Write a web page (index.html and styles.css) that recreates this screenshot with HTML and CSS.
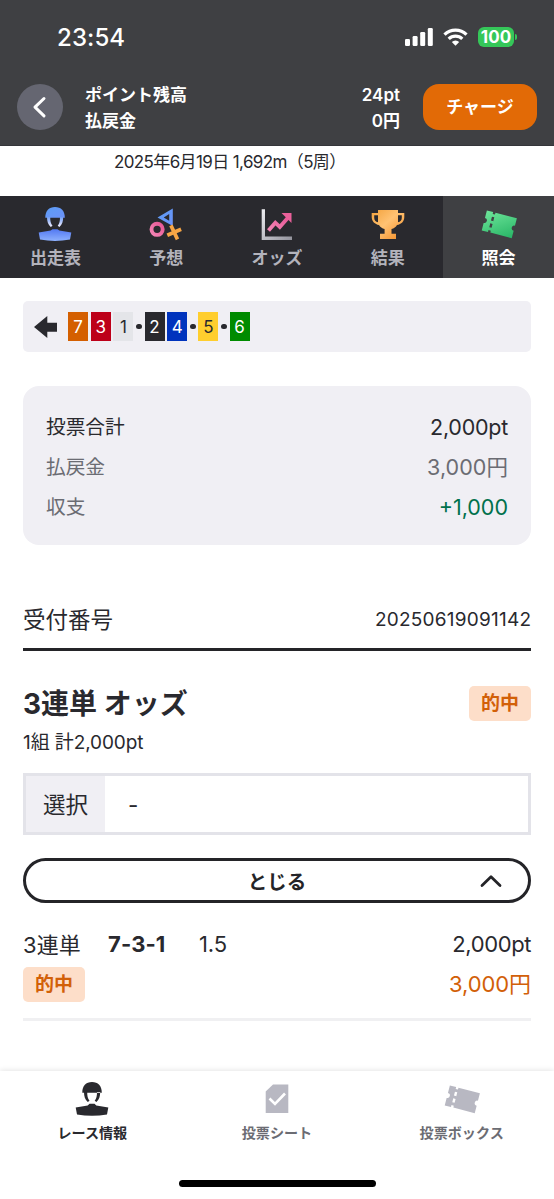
FILE: index.html
```html
<!DOCTYPE html>
<html lang="ja">
<head>
<meta charset="utf-8">
<title>照会</title>
<link rel="stylesheet" href="styles.css">
</head>
<body>
<svg class="defs" width="0" height="0" aria-hidden="true">
  <defs>
    <linearGradient id="blue" x1="0" y1="0" x2="1" y2="1"><stop offset="0" stop-color="#5c9df5"/><stop offset="1" stop-color="#6c91f8"/></linearGradient>
    <linearGradient id="face" x1="0" y1="0" x2="0" y2="1"><stop offset="0" stop-color="#6f9df5"/><stop offset="1" stop-color="#f4f0ff"/></linearGradient>
    <linearGradient id="body" x1="0" y1="0" x2="0" y2="1"><stop offset="0" stop-color="#5379f2"/><stop offset="1" stop-color="#8db0fd"/></linearGradient>
    <linearGradient id="pink" x1="0" y1="1" x2="1" y2="0"><stop offset="0" stop-color="#f486b5"/><stop offset="1" stop-color="#e65594"/></linearGradient>
    <linearGradient id="gold" x1="0" y1="0" x2="1" y2="1"><stop offset="0" stop-color="#f3a13b"/><stop offset=".45" stop-color="#ffc273"/><stop offset="1" stop-color="#f28b24"/></linearGradient>
    <linearGradient id="grey" x1="0" y1="0" x2="1" y2="1"><stop offset="0" stop-color="#eeeef2"/><stop offset="1" stop-color="#92929b"/></linearGradient>
    <linearGradient id="green" x1="0" y1="0" x2="1" y2="1"><stop offset="0" stop-color="#6ee59a"/><stop offset="1" stop-color="#28b566"/></linearGradient>
    <symbol id="ticket" viewBox="0 0 36 36">
      <g transform="translate(18.3 18.3) rotate(14.5)">
        <path d="M-15.500-10.300h6.500v2h2.400v-2H15.500v7.700a2.600 2.600 0 0 0 0 5.200v7.700H-6.600v-2h-2.400v2h-6.500v-7.700a2.600 2.600 0 0 0 0-5.200zM-9-5.500v4h2.400v-4zM-9 1.300v4h2.400v-4z" fill-rule="evenodd"/>
      </g>
    </symbol>
  </defs>
</svg>
<header class="top">
  <div class="status">
    <span class="time">23:54</span>
    <div class="indicators">
      <svg width="28" height="18" viewBox="0 0 28 18" fill="#fff"><rect y="11" width="5" height="7" rx="1.3"/><rect x="7.600" y="8" width="5" height="10" rx="1.300"/><rect x="15.200" y="4" width="5" height="14" rx="1.300"/><rect x="22.800" width="5" height="18" rx="1.300"/></svg>
      <svg class="wifi" width="25" height="18" viewBox="0 0 25 18"><g fill="none" stroke="#fff" stroke-width="3.200"><path d="M1.500 6.700a15.600 15.600 0 0 1 22 0"/><path d="M5.700 10.900a9.700 9.700 0 0 1 13.600 0"/></g><path d="M12.500 17.800l-3.700-3.700a5.300 5.300 0 0 1 7.400 0z" fill="#fff"/></svg>
      <span class="battery">100</span><i class="cap"></i>
    </div>
  </div>
  <div class="account">
    <button class="back" aria-label="戻る"><svg width="46" height="46" viewBox="0 0 46 46" fill="none" stroke="#fff" stroke-width="3" stroke-linecap="round" stroke-linejoin="round"><path d="M27 14.500l-9 8.700 9 8.700"/></svg></button>
    <div class="labels"><span>ポイント残高</span><span>払戻金</span></div>
    <div class="balance"><span>24pt</span><span>0円</span></div>
    <button class="charge">チャージ</button>
  </div>
</header>
<div class="date">2025年6月19日 1,692m（5周）</div>
<nav class="tabs">
  <a><svg width="36" height="36" viewBox="0 0 36 36"><path d="M8.300 11.700C8.200 5 12 1 18 1s9.900 4 9.800 10.700z" fill="url(#blue)"/><path d="M10 11h3.200c0 4 .5 6.500 2.300 8.800l-1.700 1.200C11 18.500 10 15.500 10 11zM26.200 11H23c0 4-.5 6.500-2.300 8.800l1.700 1.200c2.800-2.500 3.800-5.500 3.800-10z" fill="url(#face)"/><path d="M15.500 23.300h5l1.800 1.200 12 2L33 33.500Q18 36.300 3 33.500l-1.300-7 12-2z" fill="url(#body)"/></svg><span>出走表</span></a>
  <a><svg width="36" height="36" viewBox="0 0 36 36" fill="none"><path d="M24.800 2.400V20L9.500 11.500zM21.200 8l-5.500 3.500 5.500 3.200z" fill="url(#blue)" fill-rule="evenodd"/><circle cx="9.100" cy="23.300" r="5.600" stroke="url(#pink)" stroke-width="3.900"/><path d="M19.300 29.300l13.800-6M22.900 19.400l6.600 14" stroke="#f7a545" stroke-width="3.700"/></svg><span>予想</span></a>
  <a><svg width="36" height="36" viewBox="0 0 36 36" fill="none"><path d="M2.700 3.300h3.300v27.200H33V34H2.700z" fill="url(#grey)"/><path d="M9.500 24.500l6.800-7.800 4.500 4.300L30 10.500" stroke="url(#pink)" stroke-width="3.900"/><path d="M22.500 7h10v10z" fill="#e9609a"/></svg><span>オッズ</span></a>
  <a><svg width="36" height="36" viewBox="0 0 36 36"><path d="M8 4h20v3h6.300v4c0 4.500-3 7.300-7.300 8-1.200 2-3 3.500-5.500 4v4.800H26V33H10v-5.200h4.600V23c-2.500-.5-4.400-2-5.600-4-4-.7-7.300-3.500-7.300-8V7H8zM4.200 9.300v2.400c0 2.600 1.400 4 3.800 4.600v-7zm23.800 0v7c2.500-.6 3.800-2 3.800-4.600V9.300z" fill="url(#gold)" fill-rule="evenodd"/></svg><span>結果</span></a>
  <a class="current"><svg width="36" height="36" fill="url(#green)"><use href="#ticket"/></svg><span>照会</span></a>
</nav>
<main>
  <div class="order">
    <svg width="23" height="22" viewBox="0 0 23 22" fill="#29292e"><path d="M0 11L13.300 0v6.700H23v9h-9.700V22z"/></svg>
    <b class="n7">7</b><b class="n3">3</b><b class="n1">1</b><i></i><b class="n2">2</b><b class="n4">4</b><i></i><b class="n5">5</b><i></i><b class="n6">6</b>
  </div>
  <dl class="summary">
    <div class="total"><dt>投票合計</dt><dd>2,000pt</dd></div>
    <div class="payout"><dt>払戻金</dt><dd>3,000円</dd></div>
    <div class="profit"><dt>収支</dt><dd>+1,000</dd></div>
  </dl>
  <div class="receipt"><span>受付番号</span><span class="number">20250619091142</span></div>
  <section class="bet">
    <div class="bet-head"><h1>3連単 オッズ</h1><span class="hit">的中</span></div>
    <p class="count">1組 計2,000pt</p>
    <div class="choice"><span class="key">選択</span><span class="value">-</span></div>
    <button class="toggle">とじる<svg width="22" height="14" viewBox="0 0 22 14" fill="none" stroke="#242428" stroke-width="2.800" stroke-linecap="round" stroke-linejoin="round"><path d="M2 11.500L11 2.800l9 8.700"/></svg></button>
    <div class="detail">
      <div class="line"><span class="kind">3連単</span><strong>7-3-1</strong><span class="odds">1.5</span><span class="amount">2,000pt</span></div>
      <div class="line second"><span class="hit">的中</span><span class="amount won">3,000円</span></div>
    </div>
  </section>
</main>
<footer>
  <nav class="bottom">
    <a class="active"><svg width="36" height="36" viewBox="0 0 36 36" fill="#29292e"><path d="M8.300 11.700C8.200 5 12 1 18 1s9.900 4 9.800 10.700zM10 11h3.200c0 4 .5 6.500 2.300 8.800l-1.700 1.200C11 18.500 10 15.500 10 11zM26.200 11H23c0 4-.5 6.500-2.300 8.800l1.700 1.200c2.800-2.500 3.800-5.500 3.800-10zM15.500 22.800h5l1.800 1.700 12 2L33 33.500Q18 36 3 33.500l-1.300-7 12-2z"/></svg><span>レース情報</span></a>
    <a><svg width="36" height="36" viewBox="0 0 36 36"><path d="M14 3.500h15.300V32H6.700V10.500z" fill="#b8b8c2"/><path d="M10.500 17.500l5.500 5.500 10-10.500" fill="none" stroke="#fff" stroke-width="2.600"/></svg><span>投票シート</span></a>
    <a><svg width="36" height="36" fill="#b8b8c2"><use href="#ticket"/></svg><span>投票ボックス</span></a>
  </nav>
  <div class="home"></div>
</footer>
</body>
</html>
```
FILE: styles.css
```css
* { box-sizing: border-box; }
body {
  margin: 0;
  width: 554px;
  height: 1199px;
  overflow: hidden;
  display: flex;
  flex-direction: column;
  background: #fff;
  color: #29292e;
  font-family: Inter, "Noto Sans CJK JP", sans-serif;
}
button { font: inherit; padding: 0; border: 0; }
svg { display: block; flex: none; }
.defs { position: absolute; }

.top { height: 146px; flex: none; background: #3f4043; color: #fff; border-bottom: 1px solid #35363a; }
.status { height: 74px; display: flex; justify-content: space-between; padding: 0 37px 0 57px; align-items: center; }
.time { font-size: 24px; font-weight: 500; letter-spacing: .1px; padding-top: 1px; }
.indicators { display: flex; align-items: center; }
.wifi { margin: 0 10px 0 10px; }
.battery { width: 36px; height: 20px; border-radius: 6px; background: #35c759; font-size: 17px; line-height: 20px; font-weight: 700; text-align: center; }
.cap { width: 2px; height: 6px; margin-left: 1px; border-radius: 0 3px 3px 0; background: #35c759; }
.account { height: 66px; display: flex; align-items: center; padding: 0 17px; }
.back { width: 46px; height: 46px; border-radius: 50%; background: #656671; }
.labels, .balance { display: flex; flex-direction: column; font-size: 17px; line-height: 26px; font-weight: 600; }
.labels { margin-left: 22px; padding-top: 2px; }
.balance { margin-left: auto; text-align: right; font-size: 17px; padding-top: 1px; }
.charge { width: 114px; height: 46px; margin-left: 23px; border-radius: 16px; background: #e26a06; color: #fff; font-size: 17px; line-height: 44px; font-weight: 600; }

.date { height: 50px; flex: none; padding-left: 114px; font-size: 17px; line-height: 32px; letter-spacing: -.62px; white-space: nowrap; }

.tabs { display: grid; grid-template-columns: repeat(5, 1fr); height: 82px; flex: none; background: #29292e; }
.tabs a { display: flex; flex-direction: column; align-items: center; padding-top: 10px; color: #b3b3bc; font-size: 17px; font-weight: 600; line-height: 24px; gap: 4px; }
.tabs .current { background: #3f4043; color: #fff; }

main { padding: 23px 23px 0; flex: 1; }
.order { height: 51px; display: flex; align-items: center; gap: 2.700px; padding-left: 11px; border-radius: 5px; background: #f0eff4; }
.order svg { margin-right: 8.300px; }
.order b { width: 20px; height: 29px; font-size: 17px; font-weight: 400; line-height: 30px; text-align: center; color: #fff; }
.order i { width: 5.800px; height: 5.800px; border-radius: 50%; background: #29292e; }
.order .n7 { background: #d45f00; }
.order .n3 { background: #bd0019; }
.order .n1 { background: #e4e5e9; color: #29292e; }
.order .n2 { background: #29292e; }
.order .n4 { background: #0033bd; }
.order .n5 { background: #ffce2e; color: #29292e; }
.order .n6 { background: #008b00; }

.summary { margin: 34px 0 0; height: 159px; padding: 21px 23px 0; border-radius: 16px; background: #f0eff4; color: #6b6c73; }
.summary div { height: 40px; display: flex; align-items: center; justify-content: space-between; }
.summary dt { font-size: 19.700px; padding-bottom: 3px; }
.summary dd { margin: 0; font-size: 21.500px; letter-spacing: -.25px; }
.summary .payout dd { padding-bottom: 4px; letter-spacing: .05px; }
.summary .total { color: #29292e; }
.summary .profit dd { color: #00714c; padding-bottom: 1px; letter-spacing: 0; }

.receipt { height: 66px; margin-top: 40px; display: flex; align-items: center; justify-content: space-between; padding-top: 3px; border-bottom: 3px solid #242428; font-size: 22.500px; }
.number { font-size: 19px; letter-spacing: .22px; padding-top: 2px; margin-right: -.2px; }

.bet-head { display: flex; align-items: center; justify-content: space-between; margin-top: 34px; height: 36px; }
h1 { margin: 0; padding-bottom: 3px; font-size: 28px; font-weight: 700; }
.hit { width: 62px; height: 35px; border-radius: 5px; background: #fddec9; color: #d26008; font-size: 19px; line-height: 35px; font-weight: 600; text-align: center; }
.count { margin: 7px 0 0; height: 30px; font-size: 19px; line-height: 30px; letter-spacing: -.1px; }
.choice { height: 62px; margin-top: 15px; display: flex; border: 3px solid #e3e3e9; font-size: 22.500px; line-height: 57px; }
.key { width: 79px; background: #f0eff4; text-align: center; }
.value { margin-left: 23px; }
.toggle { position: relative; width: 100%; height: 45px; margin-top: 23px; display: block; border: 3px solid #242428; border-radius: 23px; background: #fff; color: #242428; font-size: 19.500px; font-weight: 600; }
.toggle svg { position: absolute; right: 26px; top: 13px; }
.detail { height: 118px; border-bottom: 3px solid #f0f0f2; padding-top: 23px; }
.line { display: flex; align-items: center; height: 36px; font-size: 22px; letter-spacing: -.4px; }
.kind { width: 85px; padding-bottom: 3px; letter-spacing: .1px; }
.line strong { width: 91px; font-weight: 700; letter-spacing: .1px; }
.odds { letter-spacing: -.1px; }
.amount { margin-left: auto; }
.second { margin-top: 4px; }
.second .hit { letter-spacing: 0; }
.won { color: #d26008; padding-bottom: 4px; letter-spacing: -.1px; }

footer { height: 128px; flex: none; background: #fff; box-shadow: 0 -1px 5px rgba(0, 0, 0, .1); display: flex; flex-direction: column; align-items: center; }
.bottom { width: 100%; height: 109px; display: grid; grid-template-columns: repeat(3, 1fr); }
.bottom a { display: flex; flex-direction: column; align-items: center; padding-top: 10px; gap: 6px; color: #6b6c73; font-size: 14.100px; line-height: 20px; font-weight: 600; }
.bottom .active { color: #29292e; }
.home { width: 197px; height: 7px; border-radius: 4px; background: #000; }
```
